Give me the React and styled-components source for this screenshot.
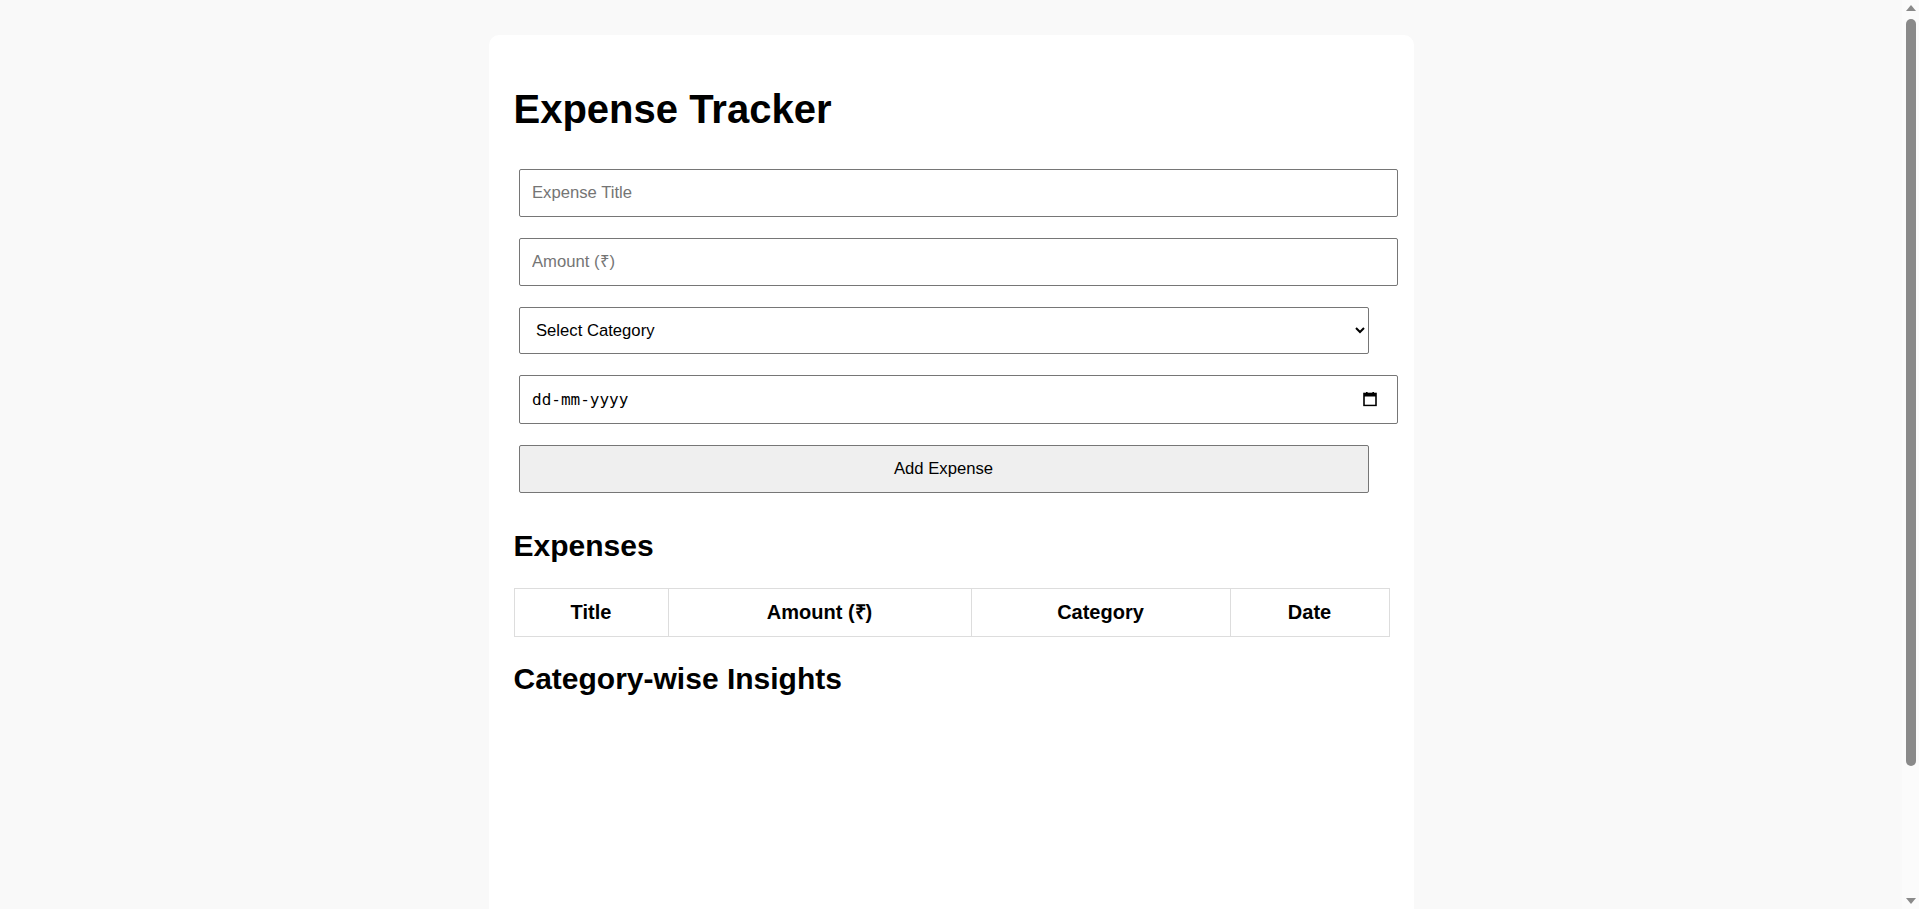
import React, { useState } from "react";
import styled, { createGlobalStyle } from "styled-components";

const GlobalStyle = createGlobalStyle`
  body {
    margin: 0;
    padding-right: 17px;
    background-color: #f9f9f9;
    font-family: "Liberation Sans", Arial, sans-serif;
    color: #000;
  }
`;

const categories = ["Food", "Travel", "Shopping", "Bills", "Other"];

function CalendarIcon() {
  return (
    <svg width="14" height="15" viewBox="0 0 14 15" aria-hidden="true">
      <rect x="1" y="2" width="12" height="12" fill="none" stroke="#000" strokeWidth="1.6" />
      <rect x="1" y="2" width="12" height="3" fill="#000" />
      <rect x="3" y="0.5" width="1.6" height="2.5" fill="#000" />
      <rect x="9.4" y="0.5" width="1.6" height="2.5" fill="#000" />
    </svg>
  );
}

export default function App() {
  const [expenses, setExpenses] = useState([]);
  const [form, setForm] = useState({ title: "", amount: "", category: "", date: "" });

  const handleChange = (e) => {
    setForm({ ...form, [e.target.name]: e.target.value });
  };

  const addExpense = (e) => {
    e.preventDefault();
    if (!form.title || !form.amount || !form.category || !form.date) return;
    setExpenses([...expenses, { ...form, id: Date.now() }]);
    setForm({ title: "", amount: "", category: "", date: "" });
  };

  return (
    <Page>
      <GlobalStyle />
      <Card>
        <Title>Expense Tracker</Title>

        <Form onSubmit={addExpense}>
          <Field
            name="title"
            placeholder="Expense Title"
            value={form.title}
            onChange={handleChange}
          />
          <Field
            name="amount"
            type="number"
            placeholder="Amount (₹)"
            value={form.amount}
            onChange={handleChange}
          />
          <Select name="category" value={form.category} onChange={handleChange}>
            <option value="">Select Category</option>
            {categories.map((c) => (
              <option key={c} value={c}>
                {c}
              </option>
            ))}
          </Select>
          <DateBox>
            <Field
              name="date"
              $mono
              placeholder="dd-mm-yyyy"
              value={form.date}
              onChange={handleChange}
            />
            <DateIcon>
              <CalendarIcon />
            </DateIcon>
          </DateBox>
          <AddButton type="submit">Add Expense</AddButton>
        </Form>

        <SectionTitle>Expenses</SectionTitle>
        <Table>
          <colgroup>
            <col style={{ width: 154 }} />
            <col style={{ width: 303 }} />
            <col style={{ width: 259 }} />
            <col style={{ width: 159 }} />
          </colgroup>
          <thead>
            <tr>
              <Th>Title</Th>
              <Th>Amount (₹)</Th>
              <Th>Category</Th>
              <Th>Date</Th>
            </tr>
          </thead>
          <tbody>
            {expenses.map((exp) => (
              <tr key={exp.id}>
                <Td>{exp.title}</Td>
                <Td>{exp.amount}</Td>
                <Td>{exp.category}</Td>
                <Td>{exp.date}</Td>
              </tr>
            ))}
          </tbody>
        </Table>

        <SectionTitle>Category-wise Insights</SectionTitle>
        <ChartArea />
      </Card>

      {/* page scrollbar, as the screenshot shows it */}
      <ScrollTrack aria-hidden="true">
        <ScrollArrow $dir="up" />
        <ScrollThumb />
        <ScrollArrow $dir="down" />
      </ScrollTrack>
    </Page>
  );
}

const Page = styled.div`
  padding: 35px 0;
`;

const Card = styled.div`
  width: 875px;
  margin: 0 auto;
  padding: 25px;
  background-color: #fff;
  border-radius: 10px;
`;

const Title = styled.h1`
  font-size: 40px;
  font-weight: bold;
  margin: 26.8px 0;
`;

const Form = styled.form`
  display: flex;
  flex-direction: column;
  align-items: flex-start;
  gap: 21px;
  padding: 10px 0 12px 5px;
`;

const Field = styled.input`
  box-sizing: border-box;
  width: 879px;
  height: ${({ $mono }) => ($mono ? "49px" : "48px")};
  padding: 0 12.5px;
  border: 1px solid #767676;
  border-radius: 2px;
  background-color: #fff;
  font-size: ${({ $mono }) => ($mono ? "16px" : "16.67px")};
  font-family: ${({ $mono }) =>
    $mono ? '"DejaVu Sans Mono", monospace' : '"Liberation Sans", Arial, sans-serif'};
  color: #000;

  &::placeholder {
    color: ${({ $mono }) => ($mono ? "#000" : "#757575")};
  }
`;

const DateBox = styled.div`
  position: relative;
  display: flex;
`;

const DateIcon = styled.span`
  position: absolute;
  right: 21px;
  top: 50%;
  transform: translateY(-50%);
  display: flex;
  pointer-events: none;
`;

const Select = styled.select`
  box-sizing: border-box;
  width: 850px;
  height: 47px;
  padding: 0 12.5px;
  border: 1px solid #767676;
  border-radius: 2px;
  background-color: #fff;
  font-size: 16.67px;
  font-family: "Liberation Sans", Arial, sans-serif;
  color: #000;
`;

const AddButton = styled.button`
  box-sizing: border-box;
  width: 850px;
  height: 48px;
  border: 1px solid #767676;
  border-radius: 2px;
  background-color: #efefef;
  font-size: 16.67px;
  font-family: "Liberation Sans", Arial, sans-serif;
  color: #000;
  cursor: pointer;
`;

const SectionTitle = styled.h2`
  font-size: 30px;
  font-weight: bold;
  margin: 24.9px 0;
`;

const Table = styled.table`
  width: 100%;
  table-layout: fixed;
  border-collapse: collapse;
`;

const Th = styled.th`
  border: 1px solid #ddd;
  padding: 12px;
  font-size: 20px;
  line-height: 23px;
  font-weight: bold;
  text-align: center;
`;

const Td = styled.td`
  border: 1px solid #ddd;
  padding: 12px;
  font-size: 20px;
  line-height: 23px;
  text-align: center;
`;

const ChartArea = styled.div`
  height: 290px;
`;

const ScrollTrack = styled.div`
  position: fixed;
  top: 0;
  right: 0;
  bottom: 0;
  width: 17px;
  background-color: #fbfbfb;
  display: flex;
  flex-direction: column;
  align-items: center;
  justify-content: space-between;
  padding: 5px 0;
  box-sizing: border-box;
`;

const ScrollThumb = styled.div`
  width: 10px;
  height: 747px;
  margin-top: 8px;
  margin-bottom: auto;
  border-radius: 5px;
  background-color: #8a8a8a;
`;

const ScrollArrow = styled.div`
  width: 0;
  height: 0;
  border-left: 5px solid transparent;
  border-right: 5px solid transparent;
  ${({ $dir }) =>
    $dir === "up"
      ? "border-bottom: 6px solid #8a8a8a;"
      : "border-top: 6px solid #8a8a8a;"}
`;
